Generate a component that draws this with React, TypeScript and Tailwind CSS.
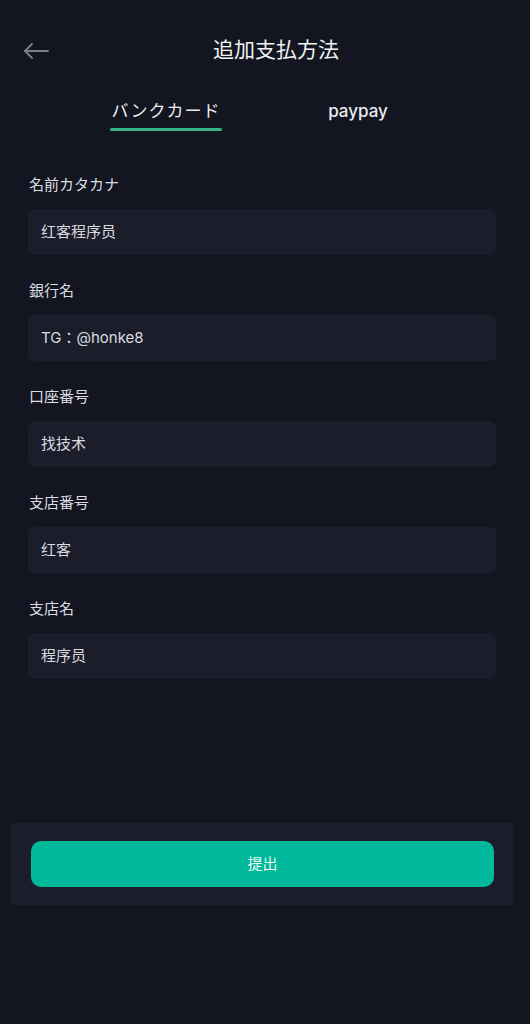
import { useState } from 'react'

const fields = [
  { label: '名前カタカナ', value: '红客程序员' },
  { label: '銀行名', value: 'TG：@honke8' },
  { label: '口座番号', value: '找技术' },
  { label: '支店番号', value: '红客' },
  { label: '支店名', value: '程序员' },
]

function BackArrow() {
  return (
    <svg width="26" height="18" viewBox="0 0 26 18" fill="none" stroke="#7b7e8c" strokeWidth="1.8" strokeLinecap="round" strokeLinejoin="round">
      <path d="M25 9H2" />
      <path d="M9 2L2 9l7 7" />
    </svg>
  )
}

export default function App() {
  const [tab, setTab] = useState<'bank' | 'paypay'>('bank')

  return (
    <div
      className="min-h-[1024px] w-[530px] bg-[#131520] pt-[28px] text-white"
      style={{ fontFamily: 'Inter, "Noto Sans CJK JP", sans-serif' }}
    >
      {/* header */}
      <div className="relative flex h-[44px] items-center justify-center pl-[22px]">
        <button type="button" className="absolute left-[23px] top-[14px]">
          <BackArrow />
        </button>
        <div className="text-[21px] font-normal text-[#f1f1f4]">追加支払方法</div>
      </div>

      {/* tabs */}
      <div className="mt-[27px] flex">
        <button type="button" onClick={() => setTab('bank')} className="ml-[110px] flex flex-col items-center">
          <span className="text-[17px] leading-[24px] tracking-[1px] text-[#ececf0]">バンクカード</span>
          <span className={`mt-[5px] h-[3px] w-[112px] rounded-full ${tab === 'bank' ? 'bg-[#35b487]' : 'bg-transparent'}`} />
        </button>
        <button type="button" onClick={() => setTab('paypay')} className="ml-[106px] flex flex-col items-center">
          <span className="text-[17px] leading-[24px] font-medium text-[#ececf0]">paypay</span>
          <span className={`mt-[5px] h-[3px] w-[60px] rounded-full ${tab === 'paypay' ? 'bg-[#35b487]' : 'bg-transparent'}`} />
        </button>
      </div>

      {/* form */}
      <div className="mt-[43px] ml-[28px] mr-[34px] flex flex-col gap-[25px]">
        {fields.map((f) => (
          <div key={f.label} className="flex flex-col">
            <div className="ml-[1px] text-[15px] leading-[22px] text-[#dcdce2]">{f.label}</div>
            <div className="mt-[13px] flex h-[46px] items-center rounded-[6px] bg-[#1c1d2a] px-[13px] text-[15px] text-[#dadae0]">
              {f.value}
            </div>
          </div>
        ))}
      </div>

      {/* submit */}
      <div className="mt-[144px] ml-[11px] mr-[16px] bg-[#1c1d2a] px-[20px] py-[18px]">
        <button
          type="button"
          className="flex h-[46px] w-full items-center justify-center rounded-[10px] bg-[#00b99a] text-[15px] text-[#eef8f5]"
        >
          提出
        </button>
      </div>
    </div>
  )
}
